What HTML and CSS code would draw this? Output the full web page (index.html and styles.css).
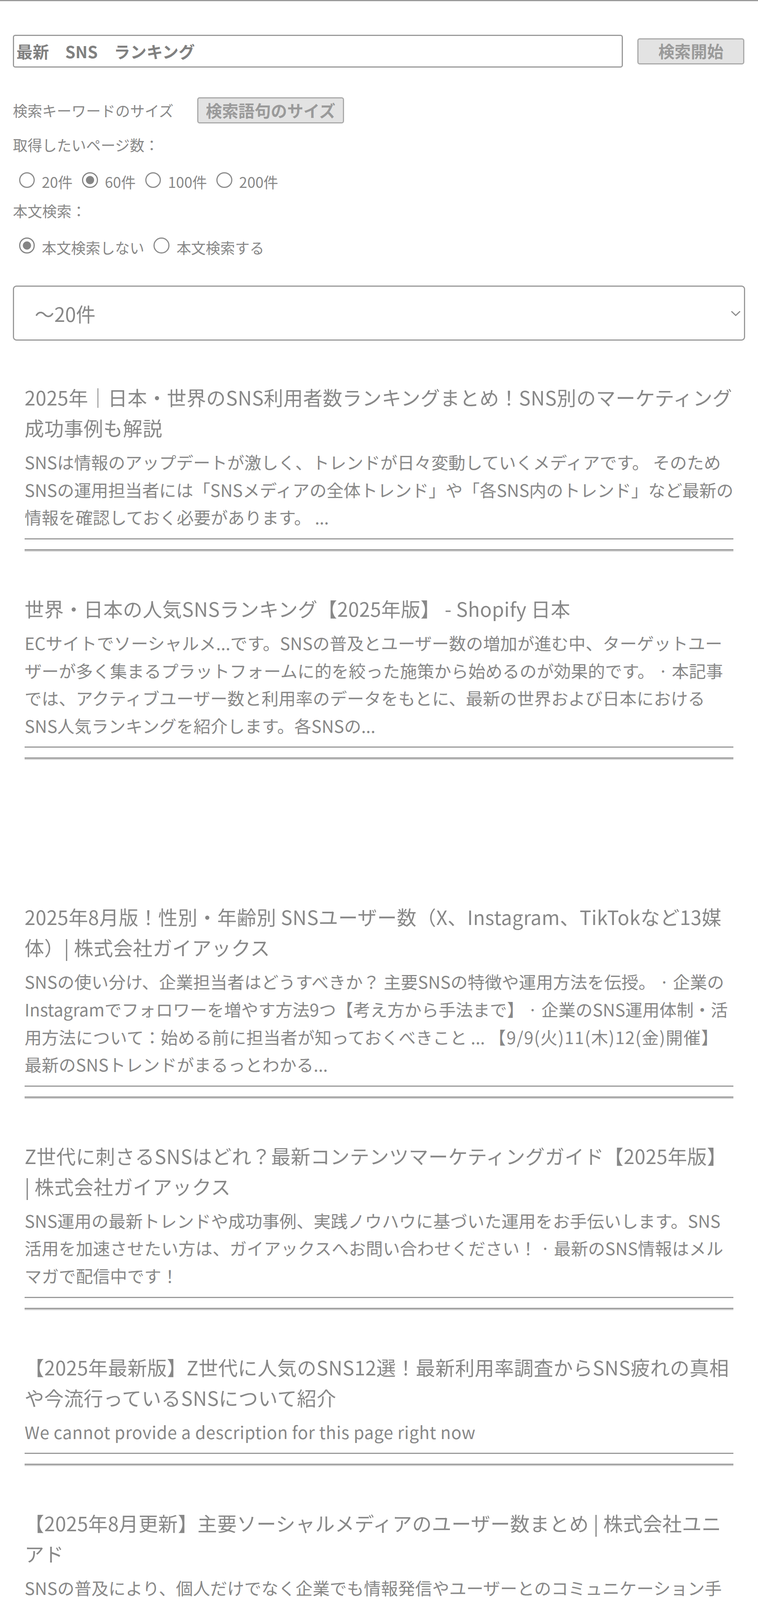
FILE: index.html
```html
<!DOCTYPE html>
<html lang="ja">
<head>
<meta charset="utf-8">
<title>最新 SNS ランキング</title>
<link rel="stylesheet" href="styles.css">
</head>
<body>
<div class="page">
  <form class="search">
    <input class="search-input" type="text" value="最新　SNS　ランキング">
    <button class="btn btn-search" type="button">検索開始</button>
  </form>

  <div class="opt-row">
    <span class="opt-label">検索キーワードのサイズ</span>
    <button class="btn btn-size" type="button">検索語句のサイズ</button>
  </div>

  <div class="field-label">取得したいページ数：</div>
  <div class="radios">
    <input type="radio" name="pages" id="p20"> <label for="p20">20件</label>
    <input type="radio" name="pages" id="p60" checked> <label for="p60">60件</label>
    <input type="radio" name="pages" id="p100"> <label for="p100">100件</label>
    <input type="radio" name="pages" id="p200"> <label for="p200">200件</label>
  </div>

  <div class="field-label field-label-2">本文検索：</div>
  <div class="radios radios-2">
    <input type="radio" name="body" id="b0" checked> <label for="b0">本文検索しない</label>
    <input type="radio" name="body" id="b1"> <label for="b1">本文検索する</label>
  </div>

  <div class="range-wrap">
    <select class="range">
      <option>～20件</option>
      <option>～40件</option>
      <option>～60件</option>
    </select>
    <svg class="range-arrow" viewBox="0 0 26 16" width="26" height="16" aria-hidden="true">
      <path d="M2 3 L13 13.5 L24 3" fill="none" stroke="#8a8a8a" stroke-width="3"/>
    </svg>
  </div>

  <div class="results">
    <div class="result">
      <a class="r-title" href="#">2025年｜日本・世界のSNS利用者数ランキングまとめ！SNS別のマーケティング成功事例も解説</a>
      <p class="r-desc r-desc-tight">SNSは情報のアップデートが激しく、トレンドが日々変動していくメディアです。 そのためSNSの運用担当者には「SNSメディアの全体トレンド」や「各SNS内のトレンド」など最新の情報を確認しておく必要があります。 ...</p>
    </div>
    <hr class="sep">

    <div class="result">
      <a class="r-title" href="#">世界・日本の人気SNSランキング【2025年版】 - Shopify 日本</a>
      <p class="r-desc">ECサイトでソーシャルメ...です。SNSの普及とユーザー数の増加が進む中、ターゲットユーザーが多く集まるプラットフォームに的を絞った施策から始めるのが効果的です。 · 本記事では、アクティブユーザー数と利用率のデータをもとに、最新の世界および日本におけるSNS人気ランキングを紹介します。各SNSの...</p>
    </div>
    <hr class="sep">

    <div class="ad-slot"></div>

    <div class="result">
      <a class="r-title" href="#">2025年8月版！性別・年齢別 SNSユーザー数（X、Instagram、TikTokなど13媒体）| 株式会社ガイアックス</a>
      <p class="r-desc">SNSの使い分け、企業担当者はどうすべきか？ 主要SNSの特徴や運用方法を伝授。 · 企業のInstagramでフォロワーを増やす方法9つ【考え方から手法まで】 · 企業のSNS運用体制・活用方法について：始める前に担当者が知っておくべきこと ... <span class="r-date">【9/9(火)11(木)12(金)開催】</span>最新のSNSトレンドがまるっとわかる...</p>
    </div>
    <hr class="sep">

    <div class="result">
      <a class="r-title" href="#">Z世代に刺さるSNSはどれ？最新コンテンツマーケティングガイド【2025年版】 | 株式会社ガイアックス</a>
      <p class="r-desc">SNS運用の最新トレンドや成功事例、実践ノウハウに基づいた運用をお手伝いします。SNS活用を加速させたい方は、ガイアックスへお問い合わせください！ · 最新のSNS情報はメルマガで配信中です！</p>
    </div>
    <hr class="sep">

    <div class="result">
      <a class="r-title" href="#">【2025年最新版】Z世代に人気のSNS12選！最新利用率調査からSNS疲れの真相や今流行っているSNSについて紹介</a>
      <p class="r-desc r-desc-latin">We cannot provide a description for this page right now</p>
    </div>
    <hr class="sep">

    <div class="result">
      <a class="r-title" href="#">【2025年8月更新】主要ソーシャルメディアのユーザー数まとめ | 株式会社ユニアド</a>
      <p class="r-desc">SNSの普及により、個人だけでなく企業でも情報発信やユーザーとのコミュニケーション手段としてSNSを活用するケースが増えていますが、どのプラットフォームを選ぶかによって成果に大きな差が出ることも少なくあ...</p>
    </div>
    <hr class="sep">

    <div class="result">
      <a class="r-title" href="#">【2025年】SNSアプリおすすめランキングTOP10 | 無料/iPhone/Androidアプリ - アプリブ</a>
      <p class="r-desc">アメリカを中心に、流行りの、<b>SNS</b> です 特徴としては、投稿や、チャットが、残らないので、気軽に、送れます。！！！ 日本でブームが来てないのが、残念ですが、僕は海外の友達とのチャットツールにしてます。...</p>
    </div>
    <hr class="sep">
  </div>
</div>
</body>
</html>
```

FILE: styles.css
```css
html {
  border-top: 3px solid #9a9a9a;
  background: #fff;
}

body {
  margin: 0;
  font-family: "Noto Sans CJK JP", "Noto Sans", sans-serif;
  color: #888;
}

.page {
  width: 1875px;
  margin: 0 auto;
}

/* search bar */
.search {
  display: flex;
  align-items: center;
  margin: 86px 0 0;
}

.search-input {
  box-sizing: border-box;
  width: 1562px;
  height: 84px;
  margin: 0;
  padding: 0 6px;
  border: 3px solid #999;
  border-radius: 6px;
  background: #fff;
  color: #808080;
  font-family: "Noto Sans CJK JP", sans-serif;
  font-size: 41.66px;
  font-weight: bold;
  outline: none;
}

.btn {
  box-sizing: border-box;
  height: 67px;
  margin: 0;
  padding: 0 19px;
  border: 3px solid #aaa;
  border-radius: 6px;
  background: #e3e3e3;
  color: #9a9a9a;
  font-family: "Noto Sans CJK JP", sans-serif;
  font-size: 41.66px;
  font-weight: bold;
  line-height: 1;
}

.btn-search {
  width: 274px;
  margin-left: 37px;
  padding: 0;
}

/* options */
.opt-row {
  display: flex;
  align-items: center;
  height: 67px;
  margin-top: 76px;
}

.opt-label {
  font-size: 37.5px;
  line-height: 62.5px;
}

.btn-size {
  margin-left: 60.6px;
}

.field-label {
  margin-top: 23.4px;
  font-size: 37.5px;
  line-height: 62.5px;
}

.field-label-2 {
  margin-top: 6px;
}

.radios {
  margin-top: 25.6px;
  font-size: 37.5px;
  line-height: 75px;
  white-space: nowrap;
}

.radios-2 {
  margin-top: 24px;
}

.radios input {
  box-sizing: border-box;
  width: 40.6px;
  height: 40.6px;
  margin: 9.4px 9.4px 0 15.6px;
  border: 3px solid #8c8c8c;
  border-radius: 50%;
  background: #fff;
  -webkit-appearance: none;
  appearance: none;
}

.radios input:checked {
  border-color: #858585;
  background: radial-gradient(circle, #858585 0 10px, #fff 11px);
}

/* range select */
.range-wrap {
  position: relative;
  margin: 61.25px 0 24px;
}

.range {
  display: block;
  box-sizing: border-box;
  width: 100%;
  height: 141px;
  margin: 0;
  padding: 0 0 0 53px;
  border: 3px solid #999;
  border-radius: 9px;
  background: #fff;
  color: #888;
  font-family: "Noto Sans CJK JP", sans-serif;
  font-size: 50px;
  -webkit-appearance: none;
  appearance: none;
  outline: none;
}

.range-arrow {
  position: absolute;
  right: 11px;
  top: 50%;
  margin-top: -8px;
  pointer-events: none;
}

/* results */
.results {
  padding: 0 30px;
}

.result {
  padding: 81px 0 19px;
  border-bottom: 3px solid #999;
}

.r-title {
  display: block;
  color: #888;
  font-size: 50px;
  line-height: 78px;
  letter-spacing: 0.375px;
  text-decoration: none;
}

.r-desc {
  margin: 14px 0 0;
  font-size: 43.75px;
  line-height: 70.6px;
}

.r-desc-tight {
  letter-spacing: -0.19px;
}

.r-date {
  letter-spacing: 1.56px;
}

.r-desc-latin {
  letter-spacing: 0.6px;
}

.r-desc b {
  font-weight: bold;
}

.sep {
  height: 0;
  margin: 25px 0;
  border: 0;
  border-top: 3px solid #999;
  border-bottom: 3px solid #cfcfcf;
}

.ad-slot {
  height: 256px;
}
```
